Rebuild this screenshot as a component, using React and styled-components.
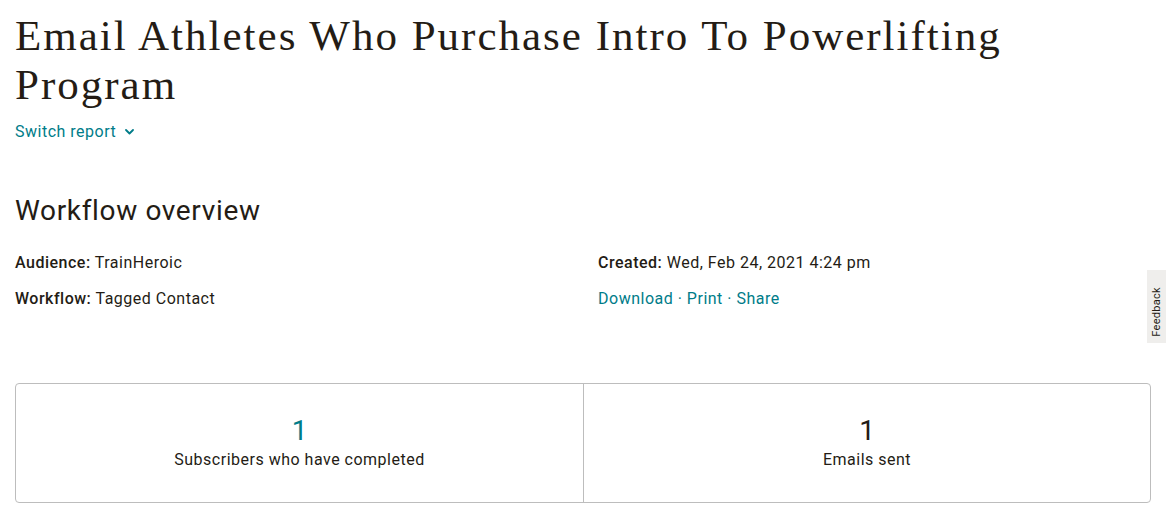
import React from "react";
import styled, { createGlobalStyle } from "styled-components";

const GlobalStyle = createGlobalStyle`
  html, body { margin: 0; padding: 0; background: #ffffff; }
  body {
    font-family: Roboto, "Liberation Sans", sans-serif;
    color: #241c15;
    letter-spacing: 0.5px;
    -webkit-font-smoothing: antialiased;
  }
  * { box-sizing: border-box; }
`;

const Page = styled.main`
  padding: 11px 15px 0 15px;
`;

const Title = styled.h1`
  margin: 0;
  max-width: 1040px;
  font-family: "Liberation Serif", serif;
  font-weight: 400;
  font-size: 43px;
  line-height: 49px;
  letter-spacing: 2px;
  color: #241c15;
`;

const SwitchLink = styled.a`
  display: inline-flex;
  align-items: center;
  gap: 9px;
  margin-top: 11px;
  font-size: 16px;
  line-height: 24px;
  color: #007c89;
  text-decoration: none;
  cursor: pointer;
`;

const SectionHeading = styled.h2`
  margin: 49px 0 0 0;
  font-size: 28px;
  line-height: 36px;
  font-weight: 400;
  letter-spacing: 0.65px;
  color: #241c15;
`;

const MetaGrid = styled.div`
  display: grid;
  grid-template-columns: 1fr 1fr;
  column-gap: 30px;
  row-gap: 12px;
  margin-top: 22px;
`;

const MetaItem = styled.div`
  font-size: 16px;
  line-height: 24px;
  color: #241c15;
`;

const Label = styled.strong`
  font-weight: 500;
`;

const LinkText = styled.a`
  color: #007c89;
  text-decoration: none;
  cursor: pointer;
`;

const Dot = styled.span`
  color: #007c89;
`;

const StatsBox = styled.section`
  margin-top: 72px;
  display: grid;
  grid-template-columns: 1fr 1fr;
  border: 1px solid #bdbdbd;
  border-radius: 4px;
`;

const StatCell = styled.div`
  display: flex;
  flex-direction: column;
  align-items: center;
  padding: 31px 0 29px;
  & + & {
    border-left: 1px solid #bdbdbd;
  }
`;

const StatNumber = styled.div`
  font-size: 28px;
  line-height: 32px;
  letter-spacing: 0;
  color: ${(p) => (p.$accent ? "#007c89" : "#241c15")};
`;

const StatLabel = styled.div`
  font-size: 16px;
  line-height: 26px;
  color: #241c15;
`;

const FeedbackTab = styled.button`
  position: fixed;
  right: 0;
  top: 270px;
  width: 19px;
  height: 73px;
  padding: 0;
  border: none;
  background: #efeeec;
  display: flex;
  align-items: center;
  justify-content: center;
  overflow: hidden;
  cursor: pointer;
`;

const FeedbackText = styled.span`
  writing-mode: vertical-rl;
  transform: rotate(180deg);
  font-family: Roboto, "Liberation Sans", sans-serif;
  font-size: 11px;
  line-height: 12px;
  letter-spacing: 0.3px;
  color: #241c15;
  margin-top: 10px;
`;

const Chevron = () => (
  <svg width="9" height="6" viewBox="0 0 9 6" fill="none">
    <path d="M1 1l3.5 3.5L8 1" stroke="#007c89" strokeWidth="1.8" strokeLinecap="round" strokeLinejoin="round" />
  </svg>
);

export default function App() {
  return (
    <>
      <GlobalStyle />
      <Page>
        <Title>Email Athletes Who Purchase Intro To Powerlifting Program</Title>
        <SwitchLink>
          Switch report <Chevron />
        </SwitchLink>
        <SectionHeading>Workflow overview</SectionHeading>
        <MetaGrid>
          <MetaItem>
            <Label>Audience:</Label> TrainHeroic
          </MetaItem>
          <MetaItem>
            <Label>Created:</Label> Wed, Feb 24, 2021 4:24 pm
          </MetaItem>
          <MetaItem>
            <Label>Workflow:</Label> Tagged Contact
          </MetaItem>
          <MetaItem>
            <LinkText>Download</LinkText> <Dot>·</Dot> <LinkText>Print</LinkText> <Dot>·</Dot>{" "}
            <LinkText>Share</LinkText>
          </MetaItem>
        </MetaGrid>
        <StatsBox>
          <StatCell>
            <StatNumber $accent>1</StatNumber>
            <StatLabel>Subscribers who have completed</StatLabel>
          </StatCell>
          <StatCell>
            <StatNumber>1</StatNumber>
            <StatLabel>Emails sent</StatLabel>
          </StatCell>
        </StatsBox>
      </Page>
      <FeedbackTab>
        <FeedbackText>Feedback</FeedbackText>
      </FeedbackTab>
    </>
  );
}
